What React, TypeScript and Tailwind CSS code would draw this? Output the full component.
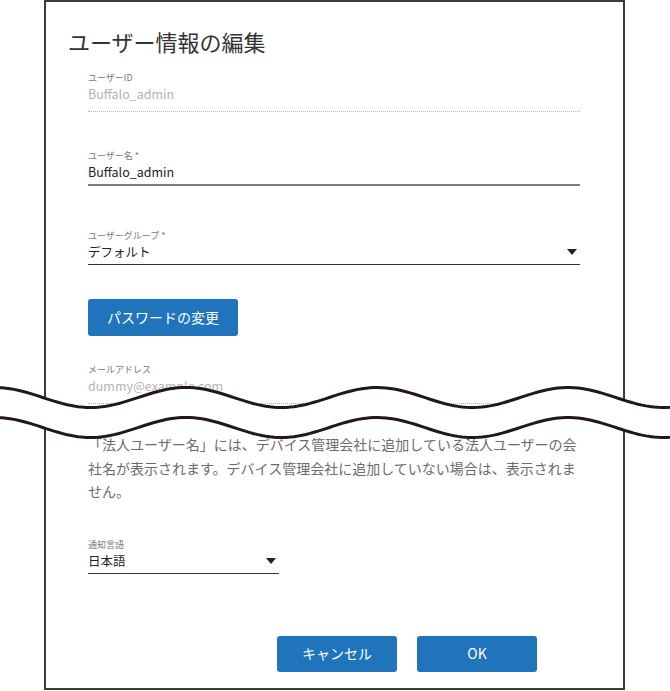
const FONT = "font-['Noto_Sans_CJK_JP',_'Noto_Sans',_sans-serif]";

// wave break drawn over the dialog (page coordinates)
function wave(dy: number) {
  const pts: [number, number][] = [];
  for (let x = -10; x <= 680; x += 4) {
    pts.push([x, 397.5 + dy - 10 * Math.cos((2 * Math.PI * (x + 5)) / 191)]);
  }
  return pts;
}

function WaveBreak() {
  const top = wave(0);
  const bottom = wave(30);
  const line = (p: [number, number][]) => 'M' + p.map(([x, y]) => `${x},${y.toFixed(2)}`).join(' L');
  const fill = line(top) + ' L' + [...bottom].reverse().map(([x, y]) => `${x},${y.toFixed(2)}`).join(' L') + ' Z';
  return (
    <svg
      className="absolute left-0 top-[370px]"
      width={670}
      height={80}
      viewBox="0 370 670 80"
      aria-hidden
    >
      <path d={fill} fill="#ffffff" />
      <path d={line(top)} fill="none" stroke="#231815" strokeWidth={3} />
      <path d={line(bottom)} fill="none" stroke="#231815" strokeWidth={3} />
    </svg>
  );
}

function Caret() {
  return (
    <svg width={10} height={6} viewBox="0 0 10 6" aria-hidden>
      <path d="M0,0 L10,0 L5,6 Z" fill="#222" />
    </svg>
  );
}

type FieldProps = {
  label: string;
  value: string;
  disabled?: boolean;
  select?: boolean;
  className?: string;
  line?: string;
};

function Field({ label, value, disabled, select, className = '', line = '' }: FieldProps) {
  return (
    <div className={'flex flex-col ' + className}>
      <span className="text-[9px] leading-[12px] text-[#7a7a7a]">{label}</span>
      <div
        className={
          'flex items-center justify-between ' + (disabled ? 'pb-[7px] ' : 'pb-[2px] ') + line
        }
      >
        <span
          className={
            'text-[12.5px] leading-[20px] ' + (disabled ? 'text-[#b3b3b3]' : 'text-[#222]')
          }
        >
          {value}
        </span>
        {select && (
          <span className="mr-[3px]">
            <Caret />
          </span>
        )}
      </div>
    </div>
  );
}

export default function App() {
  return (
    <div className={'relative h-[691px] w-[670px] overflow-hidden bg-white ' + FONT}>
      <div className="ml-[44px] flex h-[690px] w-[581px] flex-col border-2 border-[#3e3a39] bg-white">
        <h1 className="ml-[22px] mt-[24px] text-[22px] leading-[30px] text-[#333]">
          ユーザー情報の編集
        </h1>

        <div className="ml-[42px] flex w-[492px] flex-col">
          <Field
            className="mt-[16px]"
            label="ユーザーID"
            value="Buffalo_admin"
            disabled
            line="border-b border-dotted border-[#b5b5b5]"
          />
          <Field
            className="mt-[38px]"
            label="ユーザー名 *"
            value="Buffalo_admin"
            line="border-b-2 border-[#7d7d7d]"
          />
          <Field
            className="mt-[44px]"
            label="ユーザーグループ *"
            value="デフォルト"
            select
            line="border-b border-[#333]"
          />

          <button className="mt-[34px] h-[37px] w-[150px] rounded-[3px] bg-[#1f74bc] text-[14px] text-white">
            パスワードの変更
          </button>

          <Field
            className="mt-[28px]"
            label="メールアドレス"
            value="dummy@example.com"
            disabled
            line="border-b border-dotted border-[#b5b5b5]"
          />

          <p className="mt-[29px] text-[14px] leading-[23.5px] text-[#6b6b6b]">
            「法人ユーザー名」には、デバイス管理会社に追加している法人ユーザーの会社名が表示されます。デバイス管理会社に追加していない場合は、表示されません。
          </p>

          <Field
            className="mt-[35px] w-[191px]"
            label="通知言語"
            value="日本語"
            select
            line="border-b border-[#333]"
          />
        </div>

        <div className="ml-[231px] mt-[62px] flex gap-[20px]">
          <button className="h-[36px] w-[120px] rounded-[3px] bg-[#1f74bc] text-[14px] text-white">
            キャンセル
          </button>
          <button className="h-[36px] w-[120px] rounded-[3px] bg-[#1f74bc] text-[14px] text-white">
            OK
          </button>
        </div>
      </div>

      <WaveBreak />
    </div>
  );
}
